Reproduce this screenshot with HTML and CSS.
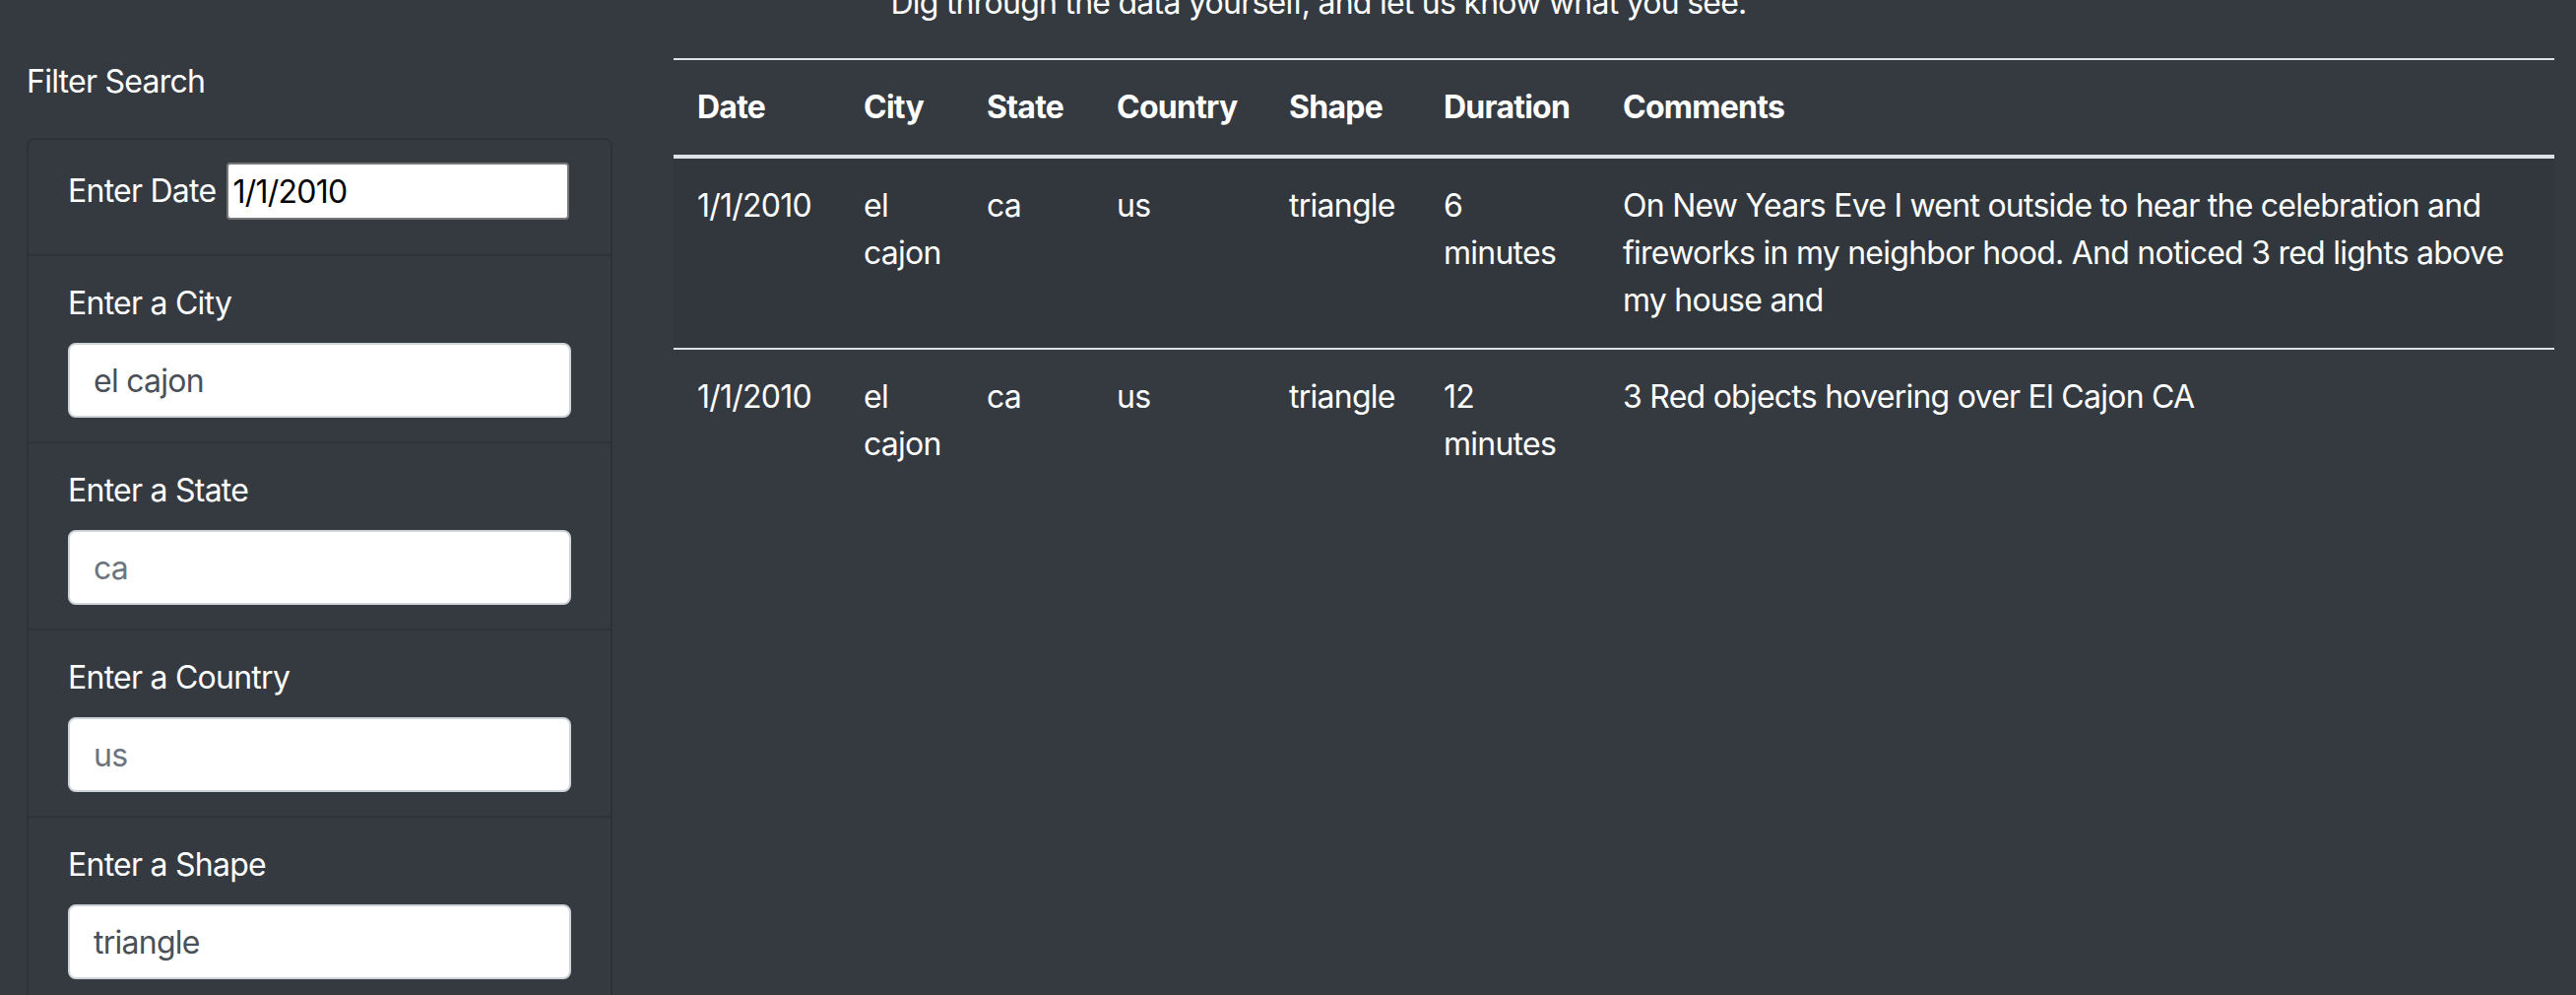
FILE: index.html
```html
<!DOCTYPE html>
<html lang="en">
<head>
<meta charset="utf-8">
<title>UFO Sightings</title>
<link rel="stylesheet" href="styles.css">
</head>
<body>
<div class="page">
  <div class="intro">
    <p>Dig through the data yourself, and let us know what you see.</p>
  </div>
  <div class="layout">
    <aside class="sidebar">
      <p class="filter-title">Filter Search</p>
      <div class="card">
        <ul class="list-group">
          <li class="list-item date-item">
            <label class="inline-label" for="datetime">Enter Date</label>
            <input class="date-input" id="datetime" type="text" value="1/1/2010">
          </li>
          <li class="list-item">
            <label class="field-label" for="city">Enter a City</label>
            <input class="form-control" id="city" type="text" value="el cajon">
          </li>
          <li class="list-item">
            <label class="field-label" for="state">Enter a State</label>
            <input class="form-control" id="state" type="text" placeholder="ca">
          </li>
          <li class="list-item">
            <label class="field-label" for="country">Enter a Country</label>
            <input class="form-control" id="country" type="text" placeholder="us">
          </li>
          <li class="list-item">
            <label class="field-label" for="shape">Enter a Shape</label>
            <input class="form-control" id="shape" type="text" value="triangle">
          </li>
        </ul>
      </div>
    </aside>
    <main class="content">
      <table class="data-table">
        <colgroup>
          <col class="c-date">
          <col class="c-city">
          <col class="c-state">
          <col class="c-country">
          <col class="c-shape">
          <col class="c-duration">
          <col class="c-comments">
        </colgroup>
        <thead>
          <tr>
            <th>Date</th>
            <th>City</th>
            <th>State</th>
            <th>Country</th>
            <th>Shape</th>
            <th>Duration</th>
            <th>Comments</th>
          </tr>
        </thead>
        <tbody>
          <tr>
            <td>1/1/2010</td>
            <td>el cajon</td>
            <td>ca</td>
            <td>us</td>
            <td>triangle</td>
            <td>6 minutes</td>
            <td>On New Years Eve I went outside to hear the celebration and fireworks in my neighbor hood. And noticed 3 red lights above my house and</td>
          </tr>
          <tr>
            <td>1/1/2010</td>
            <td>el cajon</td>
            <td>ca</td>
            <td>us</td>
            <td>triangle</td>
            <td>12 minutes</td>
            <td>3 Red objects hovering over El Cajon CA</td>
          </tr>
        </tbody>
      </table>
    </main>
  </div>
</div>
</body>
</html>
```

FILE: styles.css
```css
html, body {
  margin: 0;
  padding: 0;
  height: 100%;
  overflow: hidden;
}

body {
  background: #343a40;
  color: #fff;
  font-family: Inter, "Noto Sans", sans-serif;
  font-size: 32px;
  line-height: 48px;
  letter-spacing: -0.75px;
}

.page {
  margin-top: -21px;
}

.intro {
  padding-left: 62px;
  text-align: center;
}

.intro p {
  margin: 0 0 32px;
}

.layout {
  display: flex;
  align-items: flex-start;
  gap: 62px;
  padding: 0 22px 0 27px;
}

.sidebar {
  width: 595px;
  flex: none;
}

.filter-title {
  margin: 0 0 33px;
}

.card {
  border: 2px solid rgba(0, 0, 0, 0.125);
  border-radius: 8px;
}

.list-group {
  list-style: none;
  margin: 0;
  padding: 0;
}

.list-item {
  padding: 24px 40px;
  border-bottom: 2px solid rgba(0, 0, 0, 0.125);
}

.list-item:last-child {
  border-bottom: none;
}

.date-item {
  display: flex;
  align-items: center;
  padding-top: 23px;
  padding-bottom: 35px;
}

.inline-label {
  flex: none;
  white-space: nowrap;
  margin-right: 11px;
}

.date-input {
  flex: none;
  box-sizing: border-box;
  width: 348px;
  height: 58px;
  padding: 2px 4px;
  font: inherit;
  letter-spacing: inherit;
  line-height: 48px;
  color: #000;
  background: #fff;
  border: 2px solid #767676;
  border-radius: 4px;
}

.field-label {
  display: block;
  margin-bottom: 16px;
}

.form-control {
  display: block;
  box-sizing: border-box;
  width: 100%;
  height: 76px;
  padding: 12px 24px;
  font: inherit;
  letter-spacing: inherit;
  line-height: 48px;
  color: #495057;
  background: #fff;
  border: 2px solid #ced4da;
  border-radius: 8px;
}

.form-control::placeholder {
  color: #6c757d;
  opacity: 1;
}

.content {
  flex: 1;
  min-width: 0;
}

.data-table {
  width: 100%;
  border-collapse: collapse;
  table-layout: fixed;
}

.c-date { width: 169px; }
.c-city { width: 125px; }
.c-state { width: 132px; }
.c-country { width: 175px; }
.c-shape { width: 157px; }
.c-duration { width: 182px; }

.data-table th,
.data-table td {
  padding: 24px;
  text-align: left;
  border-top: 2px solid #dee2e6;
}

.data-table th {
  font-weight: 700;
  vertical-align: bottom;
  border-bottom: 4px solid #dee2e6;
}

.data-table td {
  vertical-align: top;
}

.data-table tbody tr:nth-of-type(odd) {
  background-color: rgba(0, 0, 0, 0.05);
}

.data-table tbody tr:last-child td {
  border-bottom: none;
}
```
